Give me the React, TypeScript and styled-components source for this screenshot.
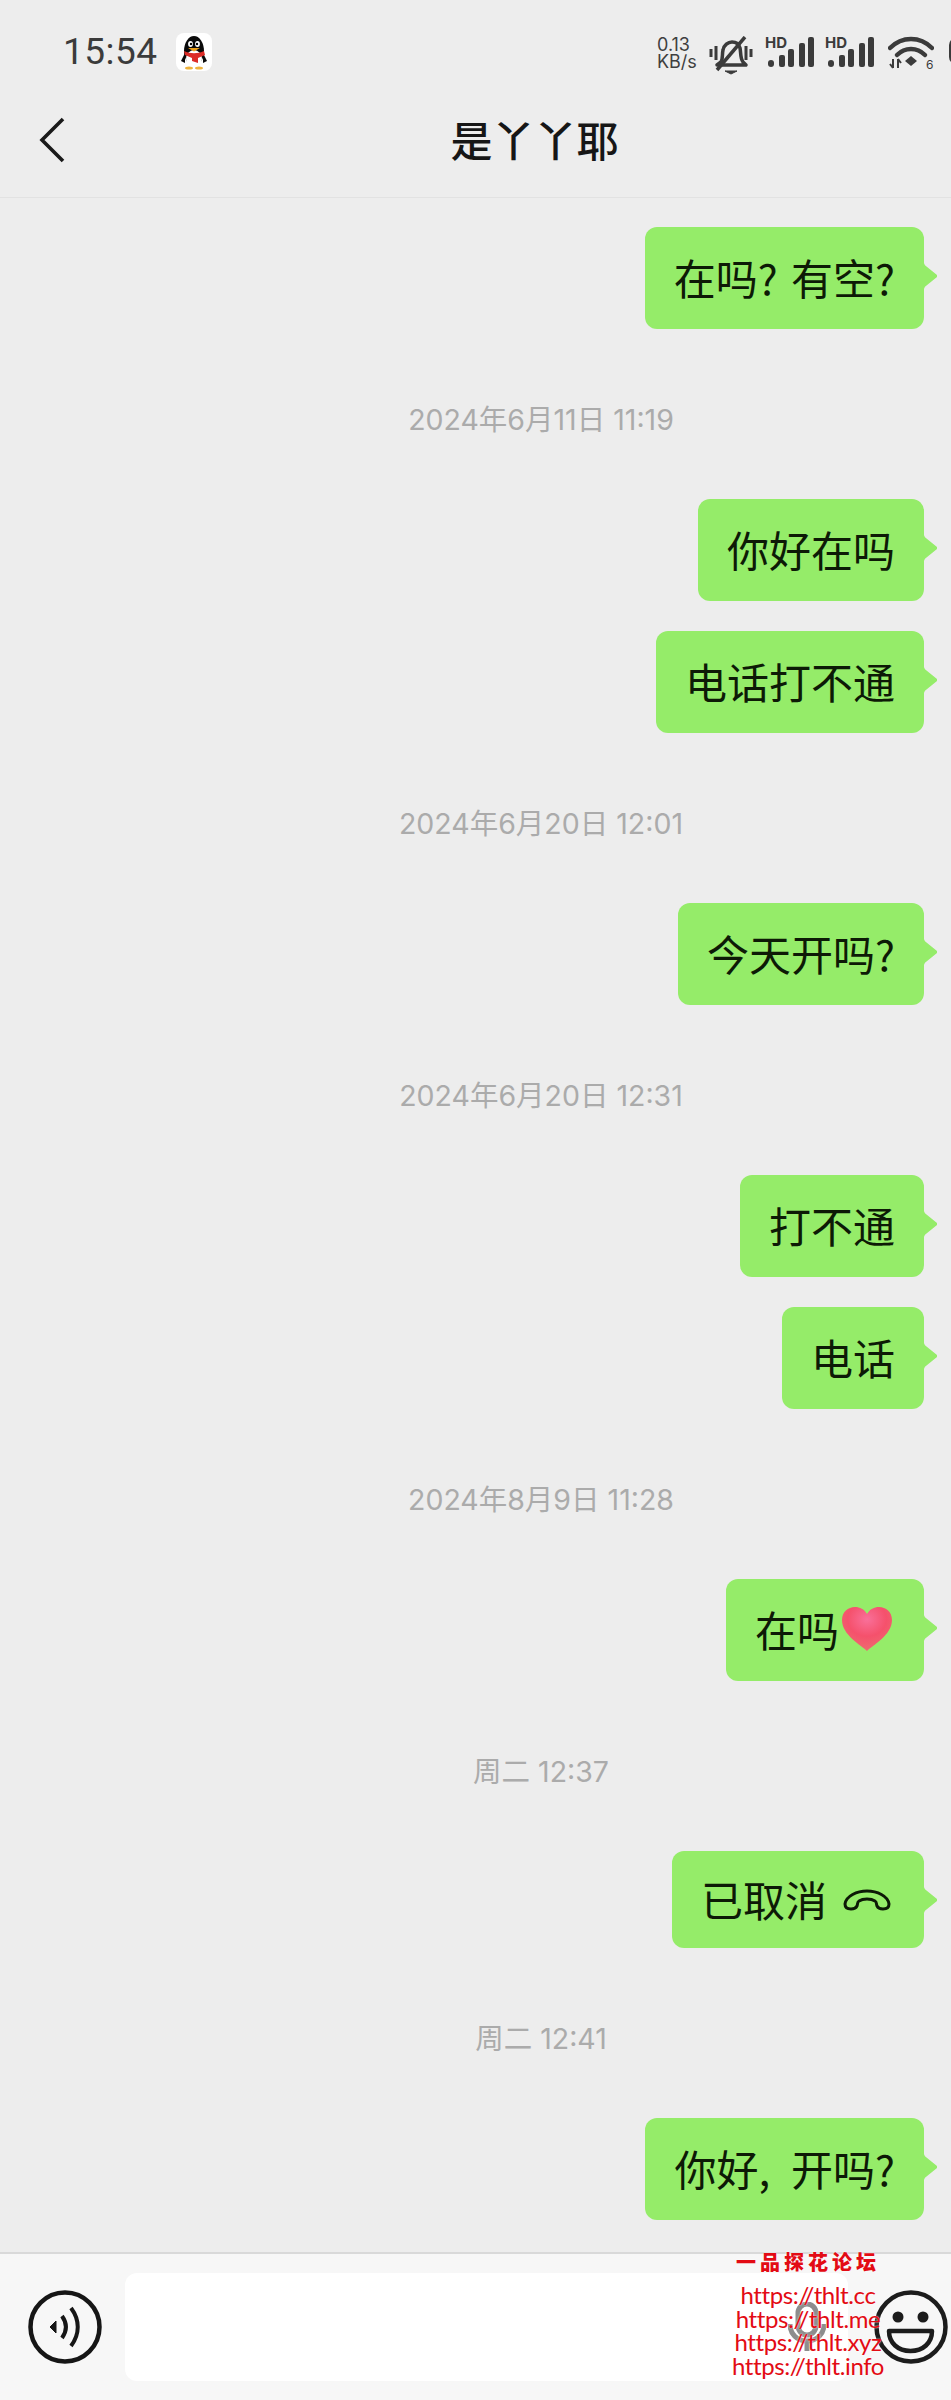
import styled, { createGlobalStyle } from 'styled-components';

const GlobalStyle = createGlobalStyle`
  html, body {
    margin: 0;
    padding: 0;
    background: #ededed;
  }
`;

const Screen = styled.div`
  width: 951px;
  height: 2400px;
  overflow: hidden;
  display: flex;
  flex-direction: column;
  background: #ededed;
  font-family: 'Noto Sans CJK SC', Roboto, sans-serif;
`;

const StatusBar = styled.div`
  height: 90px;
  padding: 12px 0 0 63px;
  box-sizing: border-box;
  display: flex;
  align-items: flex-start;
  flex-shrink: 0;
`;

const Clock = styled.span`
  font-family: Roboto, sans-serif;
  font-size: 37px;
  line-height: 80px;
  height: 80px;
  margin-top: 0;
  letter-spacing: 0.5px;
  color: #3b3b3b;
`;

const QQBadge = styled.svg`
  width: 36px;
  height: 38px;
  margin: 21px 0 0 18px;
`;

const StatusIcons = styled.div`
  margin-left: auto;
  margin-right: -28px;
  padding-top: 24px;
  display: flex;
  align-items: flex-start;
`;

const Speed = styled.div`
  width: 40px;
  margin-right: 12px;
  font-family: Inter, Roboto, sans-serif;
  font-size: 18px;
  line-height: 17px;
  color: #3f3f3f;
  white-space: nowrap;
`;

const StatusGlyph = styled.svg<{ $gap?: number }>`
  display: block;
  flex-shrink: 0;
  margin-right: ${p => p.$gap ?? 0}px;
`;

const Header = styled.div`
  height: 108px;
  flex-shrink: 0;
  box-sizing: border-box;
  border-bottom: 1px solid #e2e2e2;
  display: flex;
  align-items: center;
  position: relative;
  padding-left: 118px;
`;

const BackIcon = styled.svg`
  position: absolute;
  left: 39px;
  top: 27px;
`;

const Title = styled.div`
  width: 100%;
  text-align: center;
  font-size: 42px;
  font-weight: 500;
  color: #161616;
  line-height: 60px;
  margin-top: -9px;
`;

const MessageList = styled.div`
  flex: 1;
  min-height: 0;
  padding: 29px 27px 0 0;
  display: flex;
  flex-direction: column;
  align-items: flex-end;
`;

const Stamp = styled.div`
  align-self: stretch;
  flex-shrink: 0;
  padding-left: 158px;
  height: 40px;
  margin: 41px 0 59px;
  text-align: center;
  font-family: Inter, 'Noto Sans CJK SC', sans-serif;
  font-size: 28.5px;
  line-height: 40px;
  color: #ababab;
`;

const Bubble = styled.div<{ $short?: boolean }>`
  position: relative;
  flex-shrink: 0;
  height: ${p => (p.$short ? 97 : 102)}px;
  box-sizing: border-box;
  padding: 0 29px 3px;
  margin-bottom: 30px;
  display: flex;
  align-items: center;
  gap: 6px;
  border-radius: 12px;
  background: #95ec69;
  font-size: 42px;
  word-spacing: 4px;
  color: #0d1a06;
  white-space: nowrap;

  &:last-child {
    margin-bottom: 0;
  }

  &::after {
    content: '';
    position: absolute;
    right: -13px;
    top: 34px;
    width: 14px;
    height: 30px;
    background: #95ec69;
    clip-path: polygon(0 0, 14% 14%, 100% 47%, 100% 53%, 14% 86%, 0 100%);
  }
`;

const Footer = styled.div`
  position: relative;
  height: 148px;
  flex-shrink: 0;
  box-sizing: border-box;
  border-top: 2px solid #d9d9d9;
  background: #f7f7f7;
  display: flex;
  align-items: center;
  padding-left: 27px;
`;

const InputBox = styled.div`
  width: 723px;
  height: 108px;
  margin: 0 26px 0 22px;
  border-radius: 12px;
  background: #fff;
  display: flex;
  align-items: center;
  justify-content: flex-end;
  padding-right: 22px;
  box-sizing: border-box;
`;

const Watermark = styled.div`
  position: absolute;
  left: 700px;
  top: -6px;
  width: 216px;
  text-align: center;
  color: #e30b14;
  text-shadow: 0 0 2px #fff;
`;

const WatermarkTitle = styled.div`
  font-family: 'Noto Sans CJK SC', sans-serif;
  font-weight: 900;
  font-size: 20px;
  line-height: 28px;
  letter-spacing: 4px;
  margin: 0 0 7px 0;
`;

const WatermarkLink = styled.div`
  font-family: Lato, sans-serif;
  font-size: 24px;
  line-height: 23.7px;
  letter-spacing: -0.4px;
`;

const timeline: { stamp?: string; text?: string; extra?: 'heart' | 'hangup' }[] = [
  { text: '在吗? 有空?' },
  { stamp: '2024年6月11日 11:19' },
  { text: '你好在吗' },
  { text: '电话打不通' },
  { stamp: '2024年6月20日 12:01' },
  { text: '今天开吗?' },
  { stamp: '2024年6月20日 12:31' },
  { text: '打不通' },
  { text: '电话' },
  { stamp: '2024年8月9日 11:28' },
  { text: '在吗', extra: 'heart' },
  { stamp: '周二 12:37' },
  { text: '已取消', extra: 'hangup' },
  { stamp: '周二 12:41' },
  { text: '你好,\u2002开吗?' },
];

const Heart = () => (
  <svg width="52" height="46" viewBox="0 0 52 46" style={{ marginLeft: -4, marginRight: 2 }}>
    <defs>
      <radialGradient id="heartFill" cx="50%" cy="28%" r="70%">
        <stop offset="0%" stopColor="#f9709a" />
        <stop offset="55%" stopColor="#f5516c" />
        <stop offset="100%" stopColor="#ee6a70" />
      </radialGradient>
    </defs>
    <path
      d="M26 45C20 39 1 29 1 14 1 6 7 1 14 1c5 0 9 2 12 7 3-5 7-7 12-7 7 0 13 5 13 13 0 15-19 25-25 31z"
      fill="url(#heartFill)"
    />
  </svg>
);

const Hangup = () => (
  <svg width="48" height="22" viewBox="0 0 48 22" style={{ marginLeft: 10, marginRight: 4, marginTop: 3 }}>
    <path
      d="M2 15C3 7 14 2 24 2s21 5 22 13c0 4-3 5-6 5-3 0-5-1-6-3-1-2 0-4-2-5-3-2-5-2-8-2s-5 0-8 2c-2 1-1 3-2 5-1 2-3 3-6 3-3 0-6-1-6-5z"
      fill="none"
      stroke="#0d1a06"
      strokeWidth="3"
      strokeLinejoin="round"
    />
  </svg>
);

const SignalIcon = ({ gap }: { gap: number }) => (
  <StatusGlyph $gap={gap} width="50" height="32" viewBox="0 0 50 32">
    <text x="0" y="12" fontFamily="Inter, Roboto, sans-serif" fontSize="15" fontWeight="700" fill="#3b3b3b">
      HD
    </text>
    <g fill="#3b3b3b">
      <rect x="3" y="24" width="6" height="7" rx="3" />
      <rect x="14" y="19" width="6" height="12" rx="2" />
      <rect x="23" y="13" width="6" height="18" rx="2" />
      <rect x="34" y="7" width="6" height="24" rx="2" />
      <rect x="43" y="1" width="6" height="30" rx="2" />
    </g>
  </StatusGlyph>
);

export default function App() {
  return (
    <Screen>
      <GlobalStyle />
      <StatusBar>
        <Clock>15:54</Clock>
        <QQBadge viewBox="0 0 36 38">
          <rect width="36" height="38" rx="8" fill="#fff" />
          <ellipse cx="18" cy="18" rx="10" ry="15" fill="#0a0a0a" />
          <path d="M9 20 5 28l4 2zM27 20l4 8-4 2z" fill="#0a0a0a" />
          <ellipse cx="18" cy="26" rx="8" ry="9" fill="#fff" />
          <ellipse cx="14.5" cy="11" rx="2.4" ry="3" fill="#fff" />
          <ellipse cx="21.5" cy="11" rx="2.4" ry="3" fill="#fff" />
          <circle cx="15" cy="11" r="1.2" fill="#000" />
          <circle cx="21" cy="11" r="1.2" fill="#000" />
          <path d="M12 15h12l-6 3.5z" fill="#eea21b" />
          <path d="M8 18c6 3 14 3 20 0l1 4-7 3v5l-6-2v-3l-7-3z" fill="#dc2b26" />
          <ellipse cx="13" cy="35" rx="4" ry="1.6" fill="#eeb23b" />
          <ellipse cx="23" cy="35" rx="4" ry="1.6" fill="#eeb23b" />
        </QQBadge>
        <StatusIcons>
          <Speed>
            0.13
            <br />
            KB/s
          </Speed>
          <StatusGlyph $gap={12} width="44" height="40" viewBox="0 0 44 40" fill="none" stroke="#3b3b3b">
            <path d="M12 26c2-3 1-8 2-12 1-5 5-8 9-8s7 2 8 6c1 4 0 10 3 14l3 3H8z" strokeWidth="3.5" strokeLinejoin="round" />
            <path d="M8 34 36 1" strokeWidth="3.5" />
            <path d="M2 13v8M7 10v14M37 10v14M42 13v8" strokeWidth="3" />
            <path d="M16 35h12l-6 3z" fill="#3b3b3b" strokeWidth="1" />
          </StatusGlyph>
          <SignalIcon gap={10} />
          <SignalIcon gap={13} />
          <StatusGlyph $gap={15} width="46" height="34" viewBox="0 0 46 34" fill="none" stroke="#3b3b3b">
            <path d="M2 12C14 0 32 0 44 12" strokeWidth="4.5" strokeLinecap="round" />
            <path d="M9 19C17 11 29 11 37 19" strokeWidth="4.5" strokeLinecap="round" />
            <path d="M23 20l6 5-6 5-6-5z" fill="#3b3b3b" strokeWidth="0" />
            <path d="M5 23v9M2 28l3 4M10 23v9M10 23l3 4" strokeWidth="2" />
            <text x="38" y="33" fontFamily="Inter, sans-serif" fontSize="12" fill="#3b3b3b" stroke="none">
              6
            </text>
          </StatusGlyph>
          <StatusGlyph width="30" height="28" viewBox="0 0 30 28" fill="none" stroke="#3b3b3b">
            <rect x="1.5" y="3" width="27" height="24" rx="6" strokeWidth="3" />
          </StatusGlyph>
        </StatusIcons>
      </StatusBar>

      <Header>
        <BackIcon width="26" height="46" viewBox="0 0 26 46" fill="none" stroke="#1a1a1a" strokeWidth="3.6">
          <path d="M24 2 3 23l21 21" />
        </BackIcon>
        <Title>是丫丫耶</Title>
      </Header>

      <MessageList>
        {timeline.map((item, i) =>
          item.stamp ? (
            <Stamp key={i}>{item.stamp}</Stamp>
          ) : (
            <Bubble key={i} $short={item.extra === 'hangup'}>
              {item.text}
              {item.extra === 'heart' && <Heart />}
              {item.extra === 'hangup' && <Hangup />}
            </Bubble>
          )
        )}
      </MessageList>

      <Footer>
        <svg width="76" height="76" viewBox="0 0 76 76" fill="none" stroke="#161616">
          <circle cx="38" cy="38" r="34.5" strokeWidth="4.5" />
          <path d="M23 38l6-6v12z" fill="#161616" strokeWidth="1" />
          <path d="M35 27c5 7 5 15 0 22" strokeWidth="4" />
          <path d="M44 19c9 12 9 26 0 38" strokeWidth="4" />
        </svg>
        <InputBox>
          <svg width="38" height="50" viewBox="0 0 38 50" fill="none" stroke="#8d8d8d" strokeWidth="5">
            <rect x="10" y="2" width="18" height="31" rx="9" />
            <path d="M2 22c0 10 7 17 17 17s17-7 17-17" />
            <path d="M19 39v10" />
          </svg>
        </InputBox>
        <svg width="74" height="74" viewBox="0 0 74 74" fill="none" stroke="#1c1c1c">
          <circle cx="37" cy="37" r="34.5" strokeWidth="4.5" />
          <circle cx="24" cy="27" r="5.5" fill="#1c1c1c" stroke="none" />
          <circle cx="49" cy="27" r="5.5" fill="#1c1c1c" stroke="none" />
          <path d="M15 41h43c0 12-9 20-21.5 20S15 53 15 41z" strokeWidth="4.5" strokeLinejoin="round" />
        </svg>
        <Watermark>
          <WatermarkTitle>一品探花论坛</WatermarkTitle>
          <WatermarkLink>https://thlt.cc</WatermarkLink>
          <WatermarkLink>https://thlt.me</WatermarkLink>
          <WatermarkLink>https://thlt.xyz</WatermarkLink>
          <WatermarkLink>https://thlt.info</WatermarkLink>
        </Watermark>
      </Footer>
    </Screen>
  );
}
